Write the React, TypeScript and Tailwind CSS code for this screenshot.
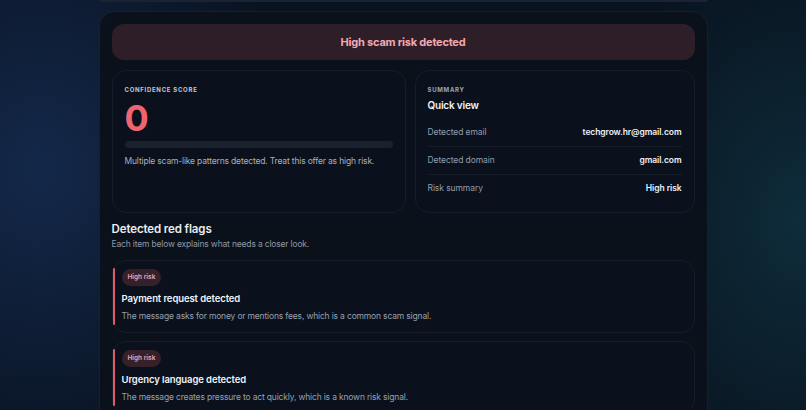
export default function App() {
  const rows = [
    { label: "Detected email", value: "techgrow.hr@gmail.com" },
    { label: "Detected domain", value: "gmail.com" },
    { label: "Risk summary", value: "High risk" },
  ];
  const flags = [
    {
      title: "Payment request detected",
      text: "The message asks for money or mentions fees, which is a common scam signal.",
    },
    {
      title: "Urgency language detected",
      text: "The message creates pressure to act quickly, which is a known risk signal.",
    },
  ];

  return (
    <div className="min-h-screen w-full overflow-hidden bg-[#09121f] bg-[radial-gradient(ellipse_260px_320px_at_40px_170px,#13284a_0%,transparent_100%),radial-gradient(ellipse_220px_300px_at_800px_220px,#0e2c3a_0%,transparent_100%)] font-['Inter',sans-serif] text-[#e6ebf2]">
      <div className="mx-auto w-[609px]">
        <div className="h-[2px] rounded-b-md bg-[#1a2331]" />
        <div className="mt-[9px] rounded-[16px] border border-[#161f2c] bg-[#0a111b] px-3 pt-3 pb-4">
          <div className="flex h-9 items-center justify-center rounded-xl bg-[#2e1e28]">
            <span className="text-[11px] font-bold tracking-[-0.02em] text-[#f5a8b2]">High scam risk detected</span>
          </div>

          <div className="mt-[10px] grid grid-cols-[294px_1fr] gap-[9px]">
            <div className="rounded-[14px] border border-[#151d29] bg-[#0a111c] px-3 pt-[14px]">
              <div className="text-[6px] leading-[9px] font-bold uppercase tracking-[0.12em] text-[#c0c8d5]">Confidence score</div>
              <div className="mt-[6px] text-[36px] font-bold leading-[36px] text-[#f06470]">0</div>
              <div className="mt-[5px] h-[7px] w-full rounded-full bg-[#19212d]" />
              <p className="mt-[7px] text-[8.5px] leading-[13px] tracking-[-0.02em] text-[#a7b0bd]">
                Multiple scam-like patterns detected. Treat this offer as high risk.
              </p>
            </div>

            <div className="rounded-[14px] border border-[#151d29] bg-[#0a111c] px-3 pt-[14px] pb-[10px]">
              <div className="text-[6px] leading-[9px] font-bold uppercase tracking-[0.12em] text-[#9ea7b5]">Summary</div>
              <div className="mt-[4px] text-[10px] leading-[15px] font-semibold tracking-[-0.02em] text-[#f1f4f8]">Quick view</div>
              <div className="mt-[5px] flex flex-col">
                {rows.map((r, i) => (
                  <div
                    key={r.label}
                    className={`flex h-[28px] items-center justify-between text-[8.5px] tracking-[-0.01em] ${i > 0 ? "border-t border-[#141c27]" : ""}`}
                  >
                    <span className="text-[#939dac]">{r.label}</span>
                    <span className="font-semibold text-[#eef2f7]">{r.value}</span>
                  </div>
                ))}
              </div>
            </div>
          </div>

          <h2 className="mt-[8px] text-[11.5px] leading-[17px] font-semibold tracking-[-0.01em] text-[#e8ecf2]">Detected red flags</h2>
          <p className="text-[8.5px] leading-[13px] tracking-[-0.02em] text-[#8e98a7]">Each item below explains what needs a closer look.</p>

          <div className="mt-[9px] flex flex-col gap-2">
            {flags.map((f) => (
              <div key={f.title} className="flex rounded-[14px] border border-[#151d29] bg-[#0a111c] pt-[7px] pb-[7px] pr-3">
                <div className="w-[2px] shrink-0 rounded-full bg-[#e25a69]" />
                <div className="flex flex-col items-start pl-[7px] pt-[1px] pb-[2px]">
                  <span className="flex h-[17px] items-center rounded-full bg-[#36202a] px-[6px] text-[6.5px] font-semibold text-[#f3a6b1]">
                    High risk
                  </span>
                  <div className="mt-[6px] text-[9.5px] leading-[14px] font-semibold tracking-[-0.01em] text-[#f1f4f8]">{f.title}</div>
                  <p className="mt-[4px] text-[8.5px] leading-[13px] tracking-[-0.02em] text-[#97a0ae]">{f.text}</p>
                </div>
              </div>
            ))}
          </div>
        </div>
      </div>
    </div>
  );
}
